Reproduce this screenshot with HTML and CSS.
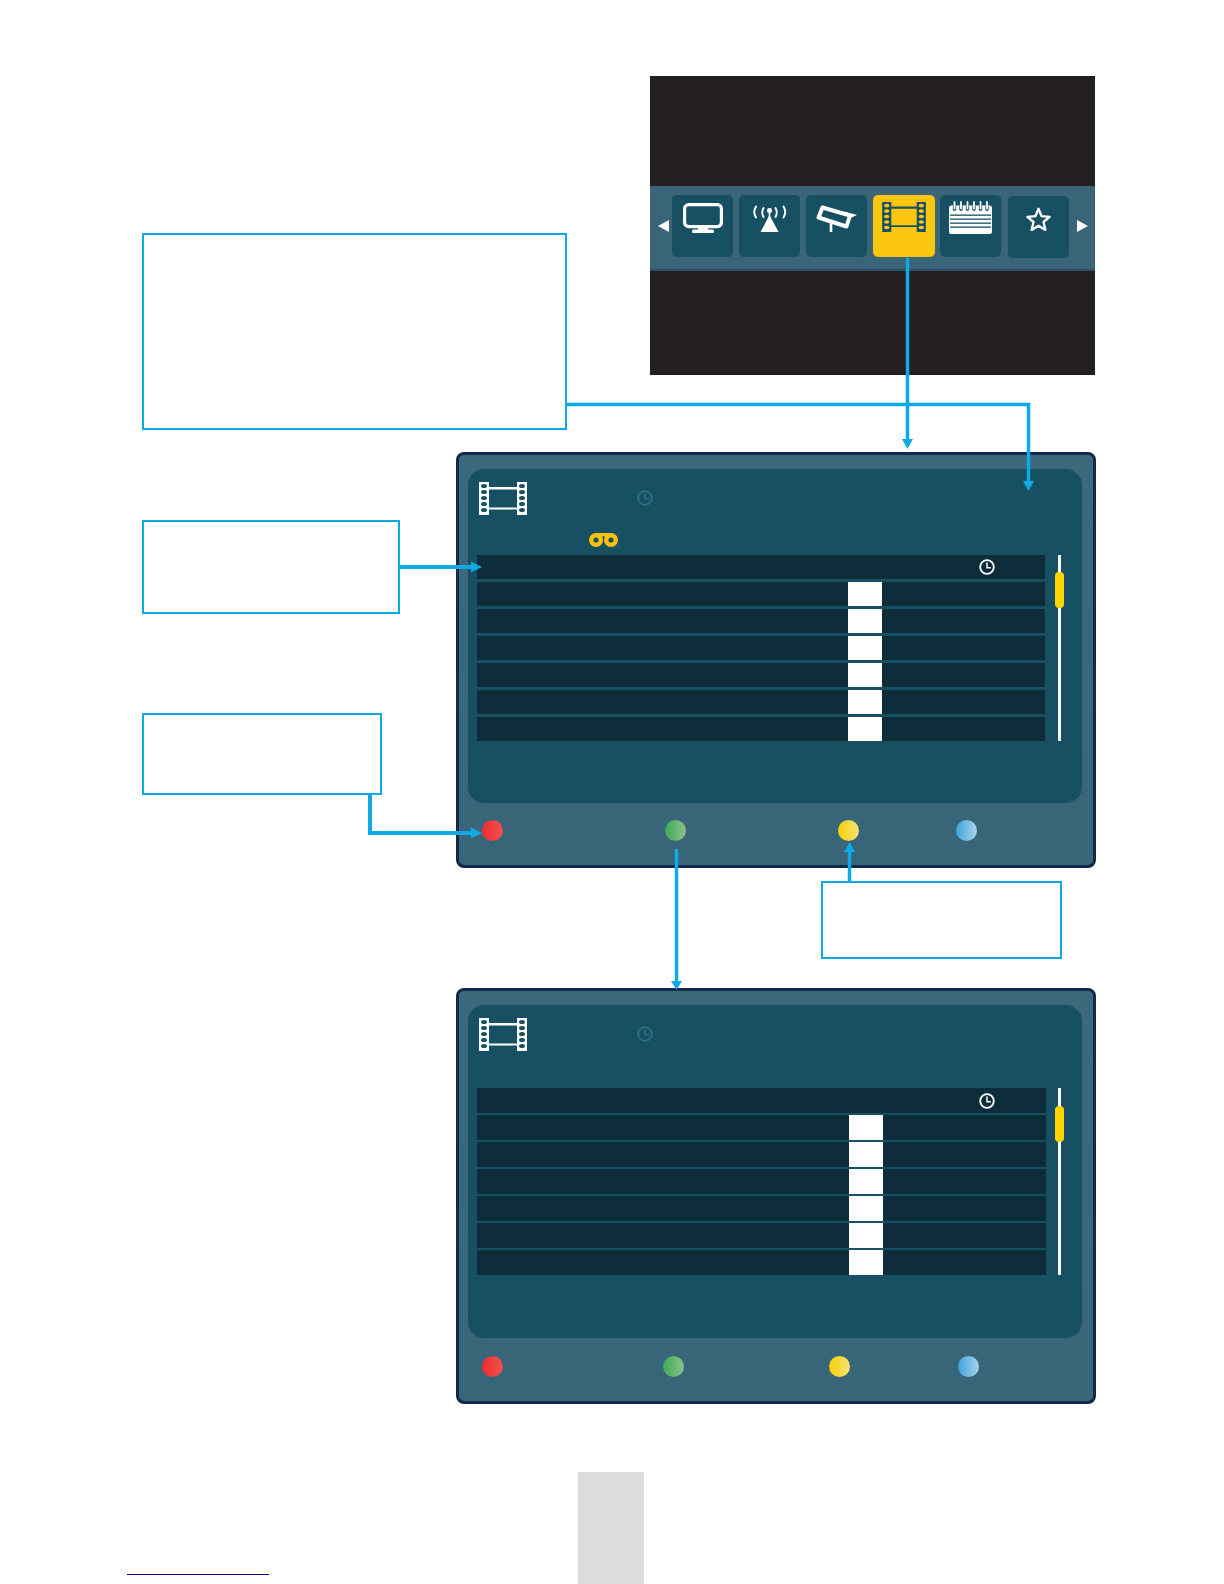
FILE: index.html
```html
<!DOCTYPE html>
<html lang="en">

<head>
    <meta charset="UTF-8">
    <meta name="viewport" content="width=device-width, initial-scale=1.0">
    <title>Recordings menu</title>
    <link rel="stylesheet" href="styles.css">
</head>

<body>
    <svg width="0" height="0" class="defs">
        <symbol id="film" viewBox="0 0 48 33">
            <path class="film-body" d="M0 0h10v5h28V0h10v33H38v-5.500H10V33H0zM10 7.500v18h28v-18z" />
            <g class="film-hole">
                <ellipse cx="5" cy="4" rx="3" ry="2" />
                <ellipse cx="5" cy="10" rx="3" ry="2" />
                <ellipse cx="5" cy="16" rx="3" ry="2" />
                <ellipse cx="5" cy="22" rx="3" ry="2" />
                <ellipse cx="5" cy="28" rx="3" ry="2" />
                <ellipse cx="43" cy="4" rx="3" ry="2" />
                <ellipse cx="43" cy="10" rx="3" ry="2" />
                <ellipse cx="43" cy="16" rx="3" ry="2" />
                <ellipse cx="43" cy="22" rx="3" ry="2" />
                <ellipse cx="43" cy="28" rx="3" ry="2" />
            </g>
        </symbol>
        <symbol id="clock" viewBox="0 0 16 16">
            <circle cx="8" cy="8" r="6.800" fill="none" stroke="currentColor" stroke-width="1.800" />
            <path d="M8 3.600V8.800H11.800" fill="none" stroke="currentColor" stroke-width="1.500" />
        </symbol>
    </svg>

    <main class="canvas">
        <!-- top picture: main menu -->
        <section class="tv-menu">
            <div class="menu-band">
                <span class="nav-arrow nav-left"></span>
                <div class="tile">
                    <svg class="icon-tv" viewBox="0 0 40 30">
                        <rect x="1.600" y="1.600" width="36.800" height="22" rx="4" fill="none" stroke="#fff" stroke-width="3.200" />
                        <rect x="15" y="24" width="10" height="3" fill="#fff" />
                        <rect x="9" y="26.500" width="22" height="3.500" rx="1.500" fill="#fff" />
                    </svg>
                </div>
                <div class="tile">
                    <svg class="icon-antenna" viewBox="0 0 34 27">
                        <path d="M16.500 10L25.500 27H7.500z" fill="#fff" />
                        <rect x="15.700" y="5" width="1.600" height="8" fill="#fff" />
                        <circle cx="16.500" cy="5.500" r="2.500" fill="#fff" />
                        <g fill="none" stroke="#fff" stroke-width="1.900" stroke-linecap="round">
                            <path d="M3 1.500Q-0.500 7 3 12.500" />
                            <path d="M30.500 1.500Q34 7 30.500 12.500" />
                            <path d="M10.500 3Q8 7.500 10.500 12" />
                            <path d="M22.500 3Q25 7.500 22.500 12" />
                        </g>
                    </svg>
                </div>
                <div class="tile">
                    <svg class="icon-camera" viewBox="0 0 41 27">
                        <path d="M6.500 2.500L34 10.500L30.500 21.500L2.500 12.500z" fill="none" stroke="#fff" stroke-width="4" stroke-linejoin="round" />
                        <path d="M28 6.500L41 10L33.500 13.500z" fill="#fff" />
                        <path d="M15 18V27" stroke="#fff" stroke-width="2.600" />
                    </svg>
                </div>
                <div class="tile tile-active">
                    <svg class="icon-film-small">
                        <use href="#film" />
                    </svg>
                </div>
                <div class="tile">
                    <svg class="icon-notes" viewBox="0 0 43 33">
                        <rect y="4.500" width="43" height="28.500" rx="2.500" fill="#fff" />
                        <g fill="#174f63">
                            <rect x="3.800" y="4" width="3.400" height="6" rx="1.700" />
                            <rect x="10.300" y="4" width="3.400" height="6" rx="1.700" />
                            <rect x="16.800" y="4" width="3.400" height="6" rx="1.700" />
                            <rect x="23.300" y="4" width="3.400" height="6" rx="1.700" />
                            <rect x="29.800" y="4" width="3.400" height="6" rx="1.700" />
                            <rect x="36.300" y="4" width="3.400" height="6" rx="1.700" />
                            <rect x="1" y="13.500" width="41" height="1.300" />
                            <rect x="1" y="17.500" width="41" height="1.300" />
                            <rect x="1" y="21.500" width="41" height="1.300" />
                            <rect x="1" y="25.500" width="41" height="1.300" />
                        </g>
                        <g stroke="#fff" stroke-width="1.800" stroke-linecap="round">
                            <path d="M5.500 1V7.500" />
                            <path d="M12 1V7.500" />
                            <path d="M18.500 1V7.500" />
                            <path d="M25 1V7.500" />
                            <path d="M31.500 1V7.500" />
                            <path d="M38 1V7.500" />
                        </g>
                    </svg>
                </div>
                <div class="tile tile-last">
                    <svg class="icon-star" viewBox="0 0 25 25">
                        <path d="M12.500 1.800L15.600 9.200L23.600 9.800L17.500 15L19.400 22.900L12.500 18.700L5.600 22.900L7.500 15L1.400 9.800L9.400 9.200z" fill="none" stroke="#fff" stroke-width="2.300" stroke-linejoin="round" />
                    </svg>
                </div>
                <span class="nav-arrow nav-right"></span>
            </div>
        </section>

        <!-- empty callouts -->
        <div class="callout callout-a"></div>
        <div class="callout callout-b"></div>
        <div class="callout callout-c"></div>
        <div class="callout callout-d"></div>

        <!-- recordings screen -->
        <section class="screen screen-one">
            <div class="panel">
                <div class="panel-head">
                    <svg class="icon-film">
                        <use href="#film" />
                    </svg>
                    <div class="head-col">
                        <svg class="icon-clock clock-dim">
                            <use href="#clock" />
                        </svg>
                        <svg class="icon-tape" viewBox="0 0 29 14">
                            <rect x="7" width="15" height="3.500" fill="#fcc010" />
                            <circle cx="7" cy="7" r="7" fill="#fcc010" />
                            <circle cx="22" cy="7" r="7" fill="#fcc010" />
                            <circle cx="7" cy="7" r="2.600" fill="#174f63" />
                            <circle cx="22" cy="7" r="2.600" fill="#174f63" />
                        </svg>
                    </div>
                </div>
                <div class="list-wrap">
                    <div class="list">
                        <div class="row row-head">
                            <svg class="icon-clock clock-light">
                                <use href="#clock" />
                            </svg>
                        </div>
                        <div class="row"><span class="cell"></span></div>
                        <div class="row"><span class="cell"></span></div>
                        <div class="row"><span class="cell"></span></div>
                        <div class="row"><span class="cell"></span></div>
                        <div class="row"><span class="cell"></span></div>
                        <div class="row"><span class="cell"></span></div>
                    </div>
                    <div class="scroll"><span class="thumb"></span></div>
                </div>
            </div>
            <div class="keys">
                <span class="key key-red"></span>
                <span class="key key-green"></span>
                <span class="key key-yellow"></span>
                <span class="key key-blue"></span>
            </div>
        </section>

        <!-- second screen, after the green key -->
        <section class="screen screen-two">
            <div class="panel">
                <div class="panel-head">
                    <svg class="icon-film">
                        <use href="#film" />
                    </svg>
                    <div class="head-col">
                        <svg class="icon-clock clock-dim">
                            <use href="#clock" />
                        </svg>
                    </div>
                </div>
                <div class="list-wrap">
                    <div class="list">
                        <div class="row row-head">
                            <svg class="icon-clock clock-light">
                                <use href="#clock" />
                            </svg>
                        </div>
                        <div class="row"><span class="cell"></span></div>
                        <div class="row"><span class="cell"></span></div>
                        <div class="row"><span class="cell"></span></div>
                        <div class="row"><span class="cell"></span></div>
                        <div class="row"><span class="cell"></span></div>
                        <div class="row"><span class="cell"></span></div>
                    </div>
                    <div class="scroll"><span class="thumb"></span></div>
                </div>
            </div>
            <div class="keys">
                <span class="key key-red"></span>
                <span class="key key-green"></span>
                <span class="key key-yellow"></span>
                <span class="key key-blue"></span>
            </div>
        </section>

        <!-- connector lines sit over everything -->
        <svg class="wires" viewBox="0 0 1224 1584">
            <g fill="none" stroke="#0fa9e6">
                <path d="M907.500 258V441" stroke-width="3.500" />
                <path d="M567 404.500H1028.500V483" stroke-width="3.500" />
                <path d="M399 567H473" stroke-width="4" />
                <path d="M370 795V833H473" stroke-width="4" />
                <path d="M676.500 849V981" stroke-width="3.500" />
                <path d="M849.500 882V850" stroke-width="3.500" />
            </g>
            <g fill="#0fa9e6">
                <path d="M902 439H913L907.500 449z" />
                <path d="M1023 481H1034L1028.500 491z" />
                <path d="M471 561.500L482 567L471 572.500z" />
                <path d="M471 827.500L482 833L471 838.500z" />
                <path d="M671 981H682L676.500 990z" />
                <path d="M844 852H855L849.500 842z" />
            </g>
        </svg>

        <span class="link-line"></span>
        <div class="page-tab"></div>
    </main>
</body>

</html>
```

FILE: styles.css
```css
body {
    margin: 0;
    font-family: "Liberation Sans", Arial, sans-serif;
    background-color: #fff;
}

.defs {
    position: absolute;
}

.canvas {
    position: relative;
    width: 1224px;
    height: 1584px;
    overflow: hidden;
}

/* top picture */
.tv-menu {
    position: absolute;
    left: 650px;
    top: 76px;
    width: 445px;
    height: 299px;
    padding-top: 110px;
    box-sizing: border-box;
    background-color: #231f20;
}

.menu-band {
    display: flex;
    align-items: flex-start;
    height: 85px;
    padding: 9px 0 0 8px;
    box-sizing: border-box;
    background-color: #3a6478;
    border-bottom: 2px solid #2a5266;
}

.tile {
    display: flex;
    justify-content: center;
    flex: none;
    width: 61px;
    height: 62px;
    margin-right: 6px;
    border-radius: 5px;
    background-color: #174f63;
}

.tile-active {
    width: 62px;
    background-color: #fdc611;
    --film-body: #174f63;
    --film-hole: #fdc611;
    margin-right: 5px;
}

.tile-last {
    margin-top: 1px;
    margin-left: 1px;
}

.nav-arrow {
    flex: none;
    width: 0;
    height: 0;
    margin-top: 25px;
    border-top: 6px solid transparent;
    border-bottom: 6px solid transparent;
}

.nav-left {
    margin-right: 3px;
    border-right: 11px solid #fff;
}

.nav-right {
    margin-left: 2px;
    border-left: 11px solid #fff;
}

.icon-tv {
    width: 40px;
    height: 30px;
    margin-top: 8px;
}

.icon-antenna {
    width: 34px;
    height: 27px;
    margin-top: 10px;
}

.icon-camera {
    width: 41px;
    height: 27px;
    margin-top: 10px;
}

.icon-film-small {
    width: 44px;
    height: 30px;
    margin-top: 7px;
}

.icon-notes {
    width: 43px;
    height: 33px;
    margin-top: 6px;
}

.icon-star {
    width: 25px;
    height: 25px;
    margin-top: 11px;
}

/* callouts */
.callout {
    position: absolute;
    box-sizing: border-box;
    border: 2px solid #0fa9e6;
    background-color: #fff;
}

.callout-a {
    left: 142px;
    top: 233px;
    width: 425px;
    height: 197px;
}

.callout-b {
    left: 142px;
    top: 520px;
    width: 258px;
    height: 94px;
}

.callout-c {
    left: 142px;
    top: 713px;
    width: 240px;
    height: 82px;
}

.callout-d {
    left: 821px;
    top: 881px;
    width: 241px;
    height: 78px;
}

/* screens */
.screen {
    position: absolute;
    left: 456px;
    display: flex;
    flex-direction: column;
    width: 640px;
    height: 416px;
    padding: 14px 11px 0 9px;
    box-sizing: border-box;
    border: 3px solid #12284c;
    border-radius: 8px;
    background: linear-gradient(#3c6a7c, #386678);
}

.screen-one {
    top: 452px;
}

.screen-two {
    top: 988px;
}

.panel {
    flex: none;
    height: 334px;
    border-radius: 16px;
    background-color: #174f63;
    --film-body: #fff;
    --film-hole: #174f63;
}

.screen-two .panel {
    height: 333px;
}

.panel-head {
    display: flex;
    align-items: flex-start;
    height: 73px;
    padding: 13px 0 0 11px;
}

.screen-two .panel-head {
    height: 70px;
}

.film-body {
    fill: var(--film-body);
}

.film-hole {
    fill: var(--film-hole);
}

.icon-film {
    flex: none;
    width: 48px;
    height: 33px;
}

.head-col {
    display: flex;
    flex-direction: column;
    align-items: flex-start;
    margin-left: 62px;
    padding-top: 8px;
}

.icon-clock {
    width: 16px;
    height: 16px;
}

.clock-dim {
    margin-left: 48px;
    color: #2b7084;
}

.clock-light {
    color: #fff;
}

.icon-tape {
    width: 29px;
    height: 14px;
    margin-top: 27px;
}

.list-wrap {
    display: flex;
    gap: 10px;
    padding-left: 9px;
}

.screen-two .list-wrap {
    gap: 9px;
}

.list {
    display: flex;
    flex-direction: column;
    gap: 3px;
    width: 568px;
}

.screen-two .list {
    gap: 2px;
    width: 569px;
}

.row {
    display: flex;
    align-items: center;
    height: 24px;
    background-color: #0e2d3a;
}

.screen-two .row {
    height: 25px;
}

.row-head {
    padding-left: 502px;
}

.cell {
    width: 34px;
    height: 100%;
    margin-left: 371px;
    background-color: #fff;
}

.screen-two .cell {
    margin-left: 372px;
}

.scroll {
    position: relative;
    width: 9px;
}

.scroll::before {
    content: "";
    display: block;
    width: 3px;
    height: 100%;
    margin: 0 auto;
    background-color: #fff;
}

.thumb {
    position: absolute;
    left: 0;
    top: 17px;
    width: 9px;
    height: 36px;
    border-radius: 4px;
    background-color: #ffd500;
}

.screen-two .thumb {
    top: 18px;
}

/* coloured keys */
.keys {
    display: flex;
    align-items: center;
    flex: 1;
    padding: 0 0 8px 14px;
}

.screen-two .keys {
    padding-bottom: 7px;
}

.key {
    flex: none;
    width: 21px;
    height: 21px;
    border-radius: 50%;
}

.key-red {
    background: linear-gradient(90deg, #ee2e34, #f0524f);
}

.key-green {
    margin-left: 162px;
    background: linear-gradient(90deg, #3eaa54, #8cc08e);
}

.key-yellow {
    margin-left: 152px;
    background: linear-gradient(90deg, #f7d000, #f5e27a);
}

.key-blue {
    margin-left: 97px;
    background: linear-gradient(90deg, #3ea4de, #a8d4ea);
}

.screen-two .key-green {
    margin-left: 160px;
}

.screen-two .key-yellow {
    margin-left: 145px;
}

.screen-two .key-blue {
    margin-left: 108px;
}

.wires {
    position: absolute;
    left: 0;
    top: 0;
    width: 1224px;
    height: 1584px;
    pointer-events: none;
}

/* page furniture */
.link-line {
    position: absolute;
    left: 127px;
    top: 1574px;
    width: 142px;
    height: 1px;
    background-color: #0a0a8c;
}

.page-tab {
    position: absolute;
    left: 578px;
    top: 1472px;
    width: 66px;
    height: 112px;
    background-color: #dcddde;
}
```
